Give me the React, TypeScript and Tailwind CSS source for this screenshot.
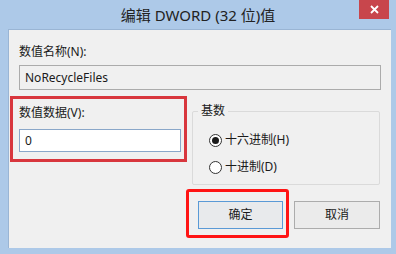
import React from 'react';

const font = { fontFamily: '"Noto Sans", "Noto Sans CJK SC", sans-serif' };

const Radio: React.FC<{ checked?: boolean; label: string }> = ({ checked, label }) => {
  return (
    <div className="flex items-center h-[16px]">
      <span className="w-[13px] h-[13px] rounded-full border border-[#333] bg-white flex items-center justify-center">
        {checked && <span className="w-[7px] h-[7px] rounded-full bg-[#1a1a1a]" />}
      </span>
      <span className="ml-[3px] text-[12px] leading-[16px] text-[#1a1a1a]">{label}</span>
    </div>
  );
};

const App: React.FC = () => {
  return (
    <div className="w-[396px] h-[254px] bg-[#adc9e8] flex flex-col overflow-hidden" style={font}>
      {/* Title bar */}
      <div className="relative h-[29px] flex items-center justify-center">
        <span className="text-[15px] text-[#222] leading-none mt-[1px]">编辑 DWORD (32 位)值</span>
        <div className="absolute top-0 left-[359px] w-[30px] h-[19px] bg-[#c8464c] flex items-center justify-center">
          <svg width="9" height="9" viewBox="0 0 9 9">
            <path d="M1 1 L8 8 M8 1 L1 8" stroke="white" strokeWidth="1.8" />
          </svg>
        </div>
      </div>

      {/* Client area */}
      <div className="ml-[8px] mr-[5px] h-[219px] bg-[#f0f0f0] border-t border-l border-[#9ab5d4] flex flex-col">
        <div className="mt-[14px] ml-[10px] text-[12px] leading-[16px] text-[#1a1a1a]">数值名称(N):</div>
        <div className="mt-[5px] ml-[10px] mr-[10px] h-[25px] border border-[#ababab] bg-[#f0f0f0] flex items-center pl-[5px] text-[12px] text-[#1a1a1a]">
          NoRecycleFiles
        </div>

        <div className="mt-[6px] flex items-start">
          <div className="ml-[1px] w-[177px] h-[66px] border-[3px] border-[#d8363d] pl-[6px] pt-[6px]">
            <div className="text-[12px] leading-[16px] text-[#1a1a1a]">数值数据(V):</div>
            <div className="mt-[8px] w-[162px] h-[23px] border border-[#8aa7c9] bg-white flex items-center pl-[5px] text-[12px] text-[#1a1a1a]">
              0
            </div>
          </div>

          <div className="relative ml-[5px] mt-[15px] w-[188px] h-[74px] border border-[#dadada] rounded-[2px]">
            <span className="absolute -top-[9px] left-[5px] px-[3px] bg-[#f0f0f0] text-[12px] leading-[16px] text-[#1a1a1a]">
              基数
            </span>
            <div className="pl-[16px] pt-[20px] flex flex-col gap-[11px]">
              <Radio checked label="十六进制(H)" />
              <Radio label="十进制(D)" />
            </div>
          </div>
        </div>

        <div className="mt-[4px] flex items-start">
          <div className="ml-[177px] w-[103px] h-[49px] border-[3px] border-[#ff1414] rounded-[3px] pl-[9px] pt-[9px]">
            <button className="w-[85px] h-[28px] border border-[#5a9ad6] bg-[#e8eaec] text-[12px] text-[#1a1a1a]">
              确定
            </button>
          </div>
          <button className="ml-[5px] mt-[12px] w-[86px] h-[28px] border border-[#acacac] bg-[#ebebeb] text-[12px] text-[#1a1a1a]">
            取消
          </button>
        </div>
      </div>
    </div>
  );
};

export default App;
